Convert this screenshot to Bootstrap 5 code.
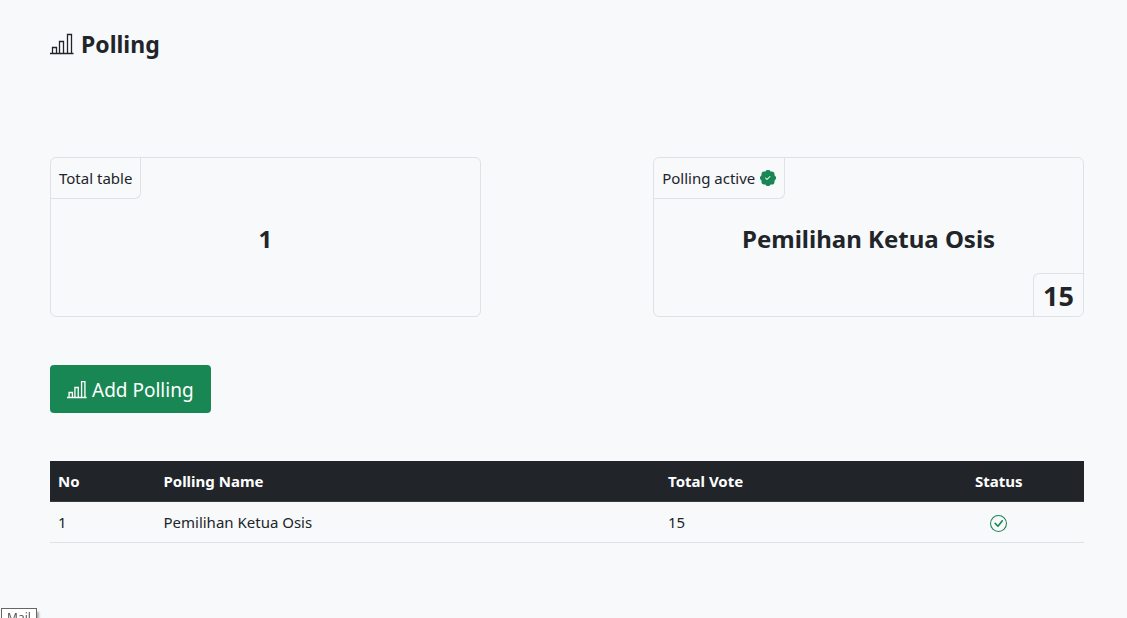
<!DOCTYPE html>
<html lang="en">
<head>
<meta charset="utf-8">
<meta name="viewport" content="width=device-width, initial-scale=1">
<title>Polling</title>
<link href="https://cdn.jsdelivr.net/npm/bootstrap@5.3.0/dist/css/bootstrap.min.css" rel="stylesheet">
<style>
  body { font-family: "Noto Sans", "Open Sans", sans-serif; font-size: 15px; line-height: 24px; background: #f8f9fb; color: #212529; min-height: 100vh; overflow: hidden; }
  .page { padding: 30px 43px 0 50px; }
  .title { font-size: 23px; line-height: 29px; margin-bottom: 98px; gap: 7px; }
  .stat { height: 160px; border: 1px solid #dee2e6; border-radius: 6px; }
  .stat-label { border: solid #dee2e6; border-width: 0 1px 1px 0; border-bottom-right-radius: 6px; padding: 8px; gap: 5px; }
  .stat-value { font-size: 24px; line-height: 32px; padding-top: 24px; }
  .stat-count { font-size: 27px; line-height: 34px; padding: 5px 9px 3px; border: solid #dee2e6; border-width: 1px 0 0 1px; border-top-left-radius: 6px; }
  .btn-add { font-size: 19px; line-height: 30px; padding: 10px 17px 8px; gap: 5px; border: 0; border-radius: 4px; background: #198754; }
  .polls { --bs-table-bg: transparent; --bs-table-color: #212529; table-layout: fixed; border-color: #dee2e6; }
  .polls thead th { background: #212529; color: #fff; border-color: #373b3e; }
  .polls svg { color: #198754; }
  .col-no { width: 10.2%; }
  .col-name { width: 48.8%; }
  .col-status { width: 16.5%; }
  .tip { left: 1px; bottom: -9px; width: 36px; height: 19px; border: 1px solid #666; background: #fff; color: #575757; font-size: 12px; line-height: 17px; box-shadow: 3px 3px 2px -1px #aaa; }
</style>
</head>
<body>
<main class="page">
  <h1 class="title fw-bold d-flex align-items-center">
    <svg width="24" height="24" viewBox="0 0 24 24" fill="none" stroke="currentColor" stroke-width="1.3" aria-hidden="true"><path d="M0 20.5h23.5M2.5 20.5v-6h4v6M9.5 20.5v-12h4v12M17.5 20.5v-19h4v19"/></svg>
    Polling
  </h1>

  <div class="row gx-0 justify-content-between mb-5">
    <section class="col-5 stat d-flex flex-column">
      <div class="stat-label align-self-start">Total table</div>
      <div class="stat-value fw-bold text-center">1</div>
    </section>
    <section class="col-5 stat d-flex flex-column">
      <div class="stat-label align-self-start d-flex align-items-center">
        Polling active
        <svg width="16" height="16" viewBox="0 0 16 16" fill="#198754" aria-hidden="true"><path d="M10.067.87a2.89 2.89 0 0 0-4.134 0l-.622.638-.89-.011a2.89 2.89 0 0 0-2.924 2.924l.01.89-.636.622a2.89 2.89 0 0 0 0 4.134l.637.622-.011.89a2.89 2.89 0 0 0 2.924 2.924l.89-.01.622.636a2.89 2.89 0 0 0 4.134 0l.622-.637.89.011a2.89 2.89 0 0 0 2.924-2.924l-.01-.89.636-.622a2.89 2.89 0 0 0 0-4.134l-.637-.622.011-.89a2.89 2.89 0 0 0-2.924-2.924l-.89.01-.622-.636zm.287 5.984-3 3a.5.5 0 0 1-.708 0l-1.5-1.5a.5.5 0 1 1 .708-.708L7 8.793l2.646-2.647a.5.5 0 0 1 .708.708z"/></svg>
      </div>
      <div class="stat-value fw-bold text-center">Pemilihan Ketua Osis</div>
      <div class="stat-count fw-bold align-self-end mt-auto">15</div>
    </section>
  </div>

  <button type="button" class="btn btn-success btn-add d-inline-flex align-items-center mb-5">
    <svg width="20" height="20" viewBox="0 0 24 24" fill="none" stroke="currentColor" stroke-width="1.6" aria-hidden="true"><path d="M0 21h23.5M2.5 21v-6h4v6M9.5 21v-12h4v12M17.5 21v-19h4v19"/></svg>
    Add Polling
  </button>

  <table class="table polls mb-0">
    <thead>
      <tr>
        <th class="col-no" scope="col">No</th>
        <th class="col-name" scope="col">Polling Name</th>
        <th scope="col">Total Vote</th>
        <th class="col-status text-center" scope="col">Status</th>
      </tr>
    </thead>
    <tbody>
      <tr>
        <td>1</td>
        <td>Pemilihan Ketua Osis</td>
        <td>15</td>
        <td class="text-center"><svg width="17" height="17" viewBox="0 0 16 16" fill="currentColor" role="img" aria-label="Active"><path d="M8 15A7 7 0 1 1 8 1a7 7 0 0 1 0 14zm0 1A8 8 0 1 0 8 0a8 8 0 0 0 0 16z"/><path d="M10.97 4.97a.235.235 0 0 0-.02.022L7.477 9.417 5.384 7.323a.75.75 0 0 0-1.06 1.06L6.97 11.03a.75.75 0 0 0 1.079-.02l3.992-4.99a.75.75 0 0 0-1.071-1.05z"/></svg></td>
      </tr>
    </tbody>
  </table>
</main>
<div class="tip position-fixed text-center">Mail</div>
<script src="https://cdn.jsdelivr.net/npm/bootstrap@5.3.0/dist/js/bootstrap.bundle.min.js"></script>
</body>
</html>
